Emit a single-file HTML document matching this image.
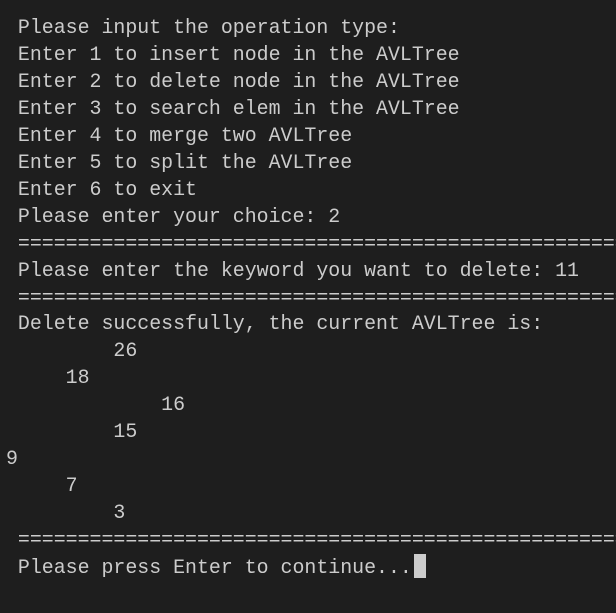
<!DOCTYPE html>
<html><head><meta charset="utf-8"><style>
html,body{margin:0;padding:0;background:#1e1e1e;width:616px;height:613px;overflow:hidden}
pre{margin:0;position:absolute;left:6px;top:15px;font-family:"Liberation Mono",monospace;font-size:19.9px;line-height:26.95px;color:#cccccc;white-space:pre}
.c{display:inline-block;width:12px;height:24px;background:#cccccc;vertical-align:-5px;margin-left:2px}
</style></head><body><pre> Please input the operation type:
 Enter 1 to insert node in the AVLTree
 Enter 2 to delete node in the AVLTree
 Enter 3 to search elem in the AVLTree
 Enter 4 to merge two AVLTree
 Enter 5 to split the AVLTree
 Enter 6 to exit
 Please enter your choice: 2
 ====================================================
 Please enter the keyword you want to delete: 11
 ====================================================
 Delete successfully, the current AVLTree is:
         26
     18
             16
         15
9
     7
         3
 ====================================================
 Please press Enter to continue...<span class="c"></span></pre></body></html>
